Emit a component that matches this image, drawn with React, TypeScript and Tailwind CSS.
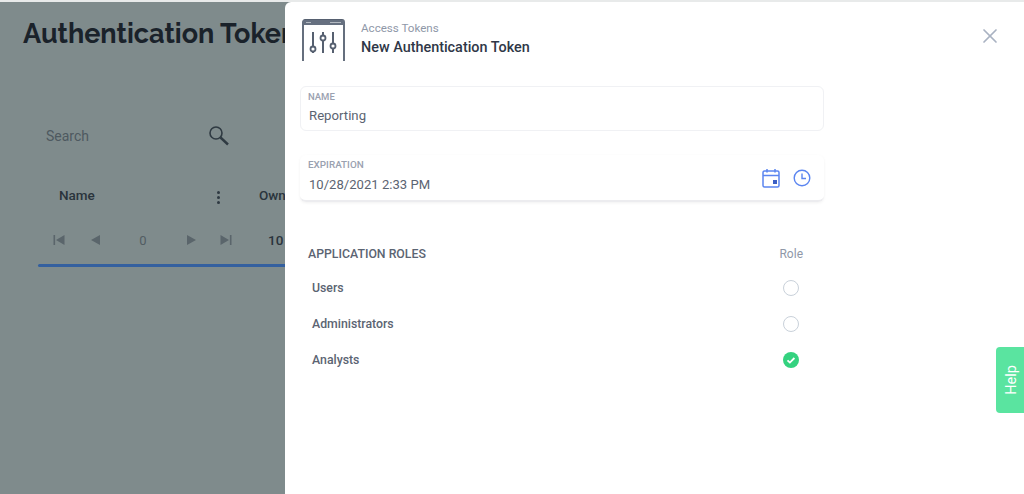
import { X } from "lucide-react";

const roles = [
  { name: "Users", checked: false },
  { name: "Administrators", checked: false },
  { name: "Analysts", checked: true },
];

const Triangle = ({ flip }: { flip?: boolean }) => (
  <svg width="12" height="12" viewBox="0 0 12 12" className={flip ? "rotate-180" : ""}>
    <path d="M10 1v10L1 6z" fill="#5a656b" />
  </svg>
);

const EdgeTriangle = ({ flip }: { flip?: boolean }) => (
  <svg width="12" height="12" viewBox="0 0 12 12" className={flip ? "rotate-180" : ""}>
    <path d="M0.5 1h1.6v10H0.5zM11.500 1v10L3 6z" fill="#5a656b" />
  </svg>
);

const SearchIcon = () => (
  <svg width="20" height="20" viewBox="0 0 20 20" fill="none" stroke="#2f3a42">
    <circle cx="7" cy="7" r="6" strokeWidth="1.600" />
    <path d="M11.500 11.500l7.500 7" strokeWidth="2.400" />
  </svg>
);

const TokenIcon = () => (
  <svg width="43" height="43" viewBox="0 0 43 43" fill="none" stroke="#566070" strokeWidth="1.800">
    <path d="M1 42V3a2 2 0 0 1 2-2h37a2 2 0 0 1 2 2v39" />
    <rect x="1" y="1" width="41" height="5" fill="#667080" stroke="none" />
    <path d="M4 3.500h5M28 3.500h11" strokeWidth="1.200" stroke="#b4bac2" />
    <path d="M11 13v14M11 33v1M21 13v3M21 22v12M31 13v11M31 30v4" strokeWidth="2" />
    <circle cx="11" cy="30" r="2.500" />
    <circle cx="21" cy="19" r="2.500" />
    <circle cx="31" cy="27" r="2.500" />
  </svg>
);

const CalendarIcon = () => (
  <svg width="18" height="20" viewBox="0 0 18 20" fill="none" stroke="#5b85f0" strokeWidth="1.500">
    <rect x="1" y="3" width="16" height="16" rx="1.500" />
    <path d="M1 7.500h16M5 1v3.500M13 1v3.500" />
    <rect x="11" y="12" width="4" height="4" fill="#3b5fc4" stroke="none" />
  </svg>
);

const ClockIcon = () => (
  <svg width="18" height="18" viewBox="0 0 18 18" fill="none" stroke="#5b85f0" strokeWidth="1.400">
    <circle cx="9" cy="9" r="7.800" />
    <path d="M9 4.500V9.500h4" />
  </svg>
);

const RoleRadio = ({ checked }: { checked: boolean }) =>
  checked ? (
    <svg width="16" height="16" viewBox="0 0 16 16" fill="none">
      <circle cx="8" cy="8" r="8" fill="#34d27f" />
      <path d="M4.500 8.300l2.400 2.300 4.500-4.600" stroke="#ffffff" strokeWidth="1.800" />
    </svg>
  ) : (
    <span className="h-4 w-4 rounded-full border border-[#c9d1da]" />
  );

export default function App() {
  return (
    <div className="relative h-[494px] w-[1024px] overflow-hidden border-t-2 border-[#e8eaea] bg-[#7f8b8c] font-['Roboto',sans-serif]">
      <div className="w-[285px] overflow-hidden pt-[15px] pl-[23px]">
        <h1 className="whitespace-nowrap font-['Raleway','Lato',sans-serif] text-[27px] leading-[34px] font-bold text-[#1a222a]">
          Authentication Tokens
        </h1>
        <div className="mt-[73px] ml-[23px] flex h-[24px] w-[183px] items-center justify-between text-sm text-[#4e5960]">
          <span>Search</span>
          <SearchIcon />
        </div>
        <div className="mt-[37px] ml-[36px] flex items-center text-[13.500px] font-medium text-[#2a343c]">
          <span className="w-[153px] shrink-0">Name</span>
          <span className="flex w-[13px] shrink-0 flex-col items-center gap-[2px] pt-1">
            <i className="h-[3px] w-[3px] rounded-full bg-[#2f3a42]" />
            <i className="h-[3px] w-[3px] rounded-full bg-[#2f3a42]" />
            <i className="h-[3px] w-[3px] rounded-full bg-[#2f3a42]" />
          </span>
          <span className="ml-[34px] shrink-0 whitespace-nowrap">Owner</span>
        </div>
        <div className="mt-[25px] ml-[30px] flex items-center text-[13px] text-[#525d63]">
          <EdgeTriangle />
          <span className="ml-[25px]"><Triangle /></span>
          <span className="ml-[26px] w-[30px] text-center">0</span>
          <span className="ml-[27px]"><Triangle flip /></span>
          <span className="ml-[23px]"><EdgeTriangle flip /></span>
          <span className="ml-[36px] text-[13.500px] font-medium text-[#2a343c]">10</span>
        </div>
        <div className="mt-[13px] ml-[15px] h-[3px] w-[260px] rounded-l-full bg-[#34609f]" />
      </div>

      <div className="absolute inset-y-0 right-0 left-[285px] rounded-tl-[6px] bg-white">
        <div className="mt-[17px] ml-[17px] flex h-[43px] items-center">
          <TokenIcon />
          <div className="mb-[5px] ml-[16px]">
            <div className="text-[11.600px] leading-[16px] text-[#8f98a8]">Access Tokens</div>
            <div className="mt-[3px] text-[14.400px] leading-[18px] font-medium text-[#2f3747]">New Authentication Token</div>
          </div>
        </div>
        <button className="absolute top-[22px] right-[22px] text-[#a9b2c2]">
          <X size={24} strokeWidth={1.700} />
        </button>

        <div className="mt-[24px] ml-[15px] h-[45px] w-[524px] rounded-[6px] border border-[#f0f1f4] px-2 pt-[4px]">
          <div className="-ml-px text-[9.500px] leading-[12px] font-medium text-[#9aa1b0]">NAME</div>
          <div className="mt-[3px] text-[13.200px] leading-[20px] text-[#5b6472]">Reporting</div>
        </div>

        <div className="mt-[24px] ml-[15px] flex h-[47px] w-[524px] items-center justify-between rounded-[6px] border-b-2 border-[#ececef] px-2 shadow-[0_1px_3px_rgba(0,0,0,0.06)]">
          <div className="self-start pt-[4px]">
            <div className="text-[9.900px] leading-[12px] font-medium text-[#9aa1b0]">EXPIRATION</div>
            <div className="mt-[4px] ml-px text-[13.100px] leading-[20px] text-[#5b6472]">10/28/2021 2:33 PM</div>
          </div>
          <div className="mt-px mr-[5px] flex items-center gap-[13px]">
            <CalendarIcon />
            <ClockIcon />
          </div>
        </div>

        <div className="mt-[43px] ml-[23px] flex w-[495px] items-center justify-between">
          <span className="text-[12.300px] font-medium text-[#5b6472]">APPLICATION ROLES</span>
          <span className="text-xs text-[#8f98a8]">Role</span>
        </div>
        <div className="mt-[7px] ml-[26px] flex w-[488px] flex-col">
          {roles.map((role) => (
            <div key={role.name} className="flex h-[36px] items-center justify-between">
              <span className="ml-px text-[12.300px] font-medium text-[#5b6472]">{role.name}</span>
              <RoleRadio checked={role.checked} />
            </div>
          ))}
        </div>
      </div>

      <div className="absolute top-[345px] right-0 flex h-[66px] w-[28px] items-center justify-center rounded-l-[4px] bg-[#5ae4a0]">
        <span className="ml-[3px] -rotate-90 text-[14.500px] text-white">Help</span>
      </div>
    </div>
  );
}
